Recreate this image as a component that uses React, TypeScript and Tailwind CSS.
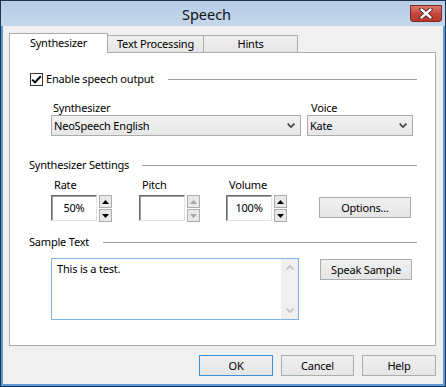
import type { ReactNode } from 'react';

function Chevron({ className }: { className?: string }) {
  return (
    <svg width="8" height="5" viewBox="0 0 8 5" className={className}>
      <path d="M0.6 0.6 L4 4 L7.4 0.6" fill="none" stroke="currentColor" strokeWidth="1.7" />
    </svg>
  );
}

function Combo({ value, className }: { value: string; className: string }) {
  return (
    <div
      className={`flex h-[21px] items-center justify-between border border-[#acacac] bg-gradient-to-b from-[#f2f2f2] to-[#e6e6e6] pl-[2px] pr-[5px] ${className}`}
    >
      <span>{value}</span>
      <Chevron className="text-[#404040]" />
    </div>
  );
}

function Arrow({ up, disabled }: { up?: boolean; disabled?: boolean }) {
  return (
    <div className="flex h-[13px] w-[13px] items-center justify-center border border-[#acacac] bg-[#e9e9e9]">
      <svg width="7" height="4" viewBox="0 0 7 4">
        <path d={up ? 'M0 4 L3.5 0 L7 4Z' : 'M0 0 L3.5 4 L7 0Z'} fill={disabled ? '#a8a8a8' : '#000'} />
      </svg>
    </div>
  );
}

function SpinField({ label, value, disabled }: { label: string; value?: string; disabled?: boolean }) {
  return (
    <div className="flex flex-col">
      <div className="h-[14px] pl-[3px] leading-[14px]">{label}</div>
      <div className="mt-[3px] flex">
        <div className="flex h-[26px] w-[46px] items-center justify-center border border-t-[#6a6a6a] border-l-[#6a6a6a] border-r-[#e3e3e3] border-b-[#e3e3e3] bg-white shadow-[inset_1px_1px_0_#a0a0a0]">
          {value}
        </div>
        <div className="ml-[2px] flex flex-col gap-[1px]">
          <Arrow up disabled={disabled} />
          <Arrow disabled={disabled} />
        </div>
      </div>
    </div>
  );
}

function GroupHeader({ children }: { children: ReactNode }) {
  return (
    <div className="flex h-[14px] items-center pr-[18px]">
      {children}
      <div className="h-px flex-1 bg-[#a0a0a0]" />
    </div>
  );
}

function Button({ children, className }: { children: ReactNode; className: string }) {
  return (
    <div
      className={`flex h-[21px] items-center justify-center border bg-gradient-to-b from-[#f0f0f0] to-[#e5e5e5] ${className}`}
    >
      {children}
    </div>
  );
}

export default function App() {
  return (
    <div className="h-[387px] w-[446px] border border-[#1c3450] font-['Noto_Sans',sans-serif] text-[11px] leading-[14px] tracking-[-0.2px] text-black">
      <div className="flex h-full flex-col">
        {/* title bar */}
        <div className="flex h-[25px] items-start bg-gradient-to-b from-[#b7cde6] to-[#c4d7ec]">
          <div className="flex-1 pl-[2px] pt-[4px] text-center text-[14.5px] leading-[18px] tracking-normal text-[#111]">Speech</div>
          <div className="mr-[3px] mt-[4px] flex h-[17px] w-[32px] items-center justify-center rounded-b-[3px] border border-[#7a2a22] bg-gradient-to-b from-[#d7786c] via-[#c54a3c] to-[#b8392c]">
            <svg width="14" height="11" viewBox="0 0 14 11">
              <path d="M2.5 1.5 L11.5 9.5 M11.5 1.5 L2.5 9.5" stroke="#4a1a14" strokeWidth="4.2" strokeLinecap="round" />
              <path d="M2.5 1.5 L11.5 9.5 M11.5 1.5 L2.5 9.5" stroke="#fff" strokeWidth="2.4" strokeLinecap="round" />
            </svg>
          </div>
        </div>

        {/* client */}
        <div className="flex flex-1 flex-col border-x-2 border-b-2 border-[#5a9ad8]">
          <div className="flex flex-1 flex-col bg-[#f0f0f0] pl-[6px] pr-[6px] pt-[7px]">
            {/* tabs */}
            <div className="relative z-10 -mb-px flex h-[20px] items-start">
              <div className="flex h-[20px] w-[99px] items-center justify-center border border-b-0 border-[#acacac] bg-white pb-[1px]">
                Synthesizer
              </div>
              <div className="mt-[2px] flex h-[17px] w-[96px] items-center justify-center border border-b-0 border-l-0 border-[#acacac] bg-gradient-to-b from-[#f0f0f0] to-[#e5e5e5]">
                Text Processing
              </div>
              <div className="mt-[2px] flex h-[17px] w-[94px] items-center justify-center border border-b-0 border-l-0 border-[#acacac] bg-gradient-to-b from-[#f0f0f0] to-[#e5e5e5]">
                Hints
              </div>
            </div>

            {/* panel */}
            <div className="flex h-[294px] w-[427px] flex-col border border-[#acacac] bg-white">
              <div className="mt-[19px] pl-[20px]">
                <GroupHeader>
                  <div className="flex h-[13px] w-[13px] items-center justify-center border border-[#333] bg-white">
                    <svg width="11" height="9" viewBox="0 0 11 9">
                      <path d="M1.2 4.6 L4 7.4 L9.8 1.2" fill="none" stroke="#000" strokeWidth="2" />
                    </svg>
                  </div>
                  <span className="ml-[3px] w-[122px]">Enable speech output</span>
                </GroupHeader>
              </div>

              <div className="mt-[15px] flex pl-[41px]">
                <div className="flex flex-col">
                  <div className="h-[14px] pl-[2px]">Synthesizer</div>
                  <Combo value="NeoSpeech English" className="w-[250px]" />
                </div>
                <div className="ml-[6px] flex flex-col">
                  <div className="h-[14px] pl-[4px]">Voice</div>
                  <Combo value="Kate" className="w-[106px]" />
                </div>
              </div>

              <div className="mt-[22px] pl-[19px]">
                <GroupHeader>
                  <span className="w-[113px]">Synthesizer Settings</span>
                </GroupHeader>
              </div>

              <div className="mt-[6px] flex items-start pl-[41px]">
                <SpinField label="Rate" value="50%" />
                <div className="ml-[27px]">
                  <SpinField label="Pitch" disabled />
                </div>
                <div className="ml-[26px]">
                  <SpinField label="Volume" value="100%" />
                </div>
                <Button className="ml-[32px] mt-[19px] w-[92px] border-[#acacac]">Options...</Button>
              </div>

              <div className="mt-[13px] pl-[19px]">
                <GroupHeader>
                  <span className="w-[74px]">Sample Text</span>
                </GroupHeader>
              </div>

              <div className="mt-[9px] flex items-start pl-[41px]">
                <div className="flex h-[62px] w-[248px] border border-[#7eb4ea] bg-white">
                  <div className="flex-1 pl-[5px] pt-[3px]">This is a test.</div>
                  <div className="flex w-[17px] flex-col items-center justify-between bg-[#f0f0f0] py-[6px] text-[#c2c2c2]">
                    <Chevron className="rotate-180" />
                    <Chevron />
                  </div>
                </div>
                <Button className="ml-[21px] mt-px w-[92px] border-[#acacac]">Speak Sample</Button>
              </div>
            </div>

            {/* buttons */}
            <div className="mt-[9px] flex justify-end gap-[8px] pr-[1px]">
              <Button className="w-[74px] border-[#3d8ee0]">OK</Button>
              <Button className="w-[73px] border-[#acacac]">Cancel</Button>
              <Button className="w-[74px] border-[#acacac]">Help</Button>
            </div>
          </div>
        </div>
      </div>
    </div>
  );
}
